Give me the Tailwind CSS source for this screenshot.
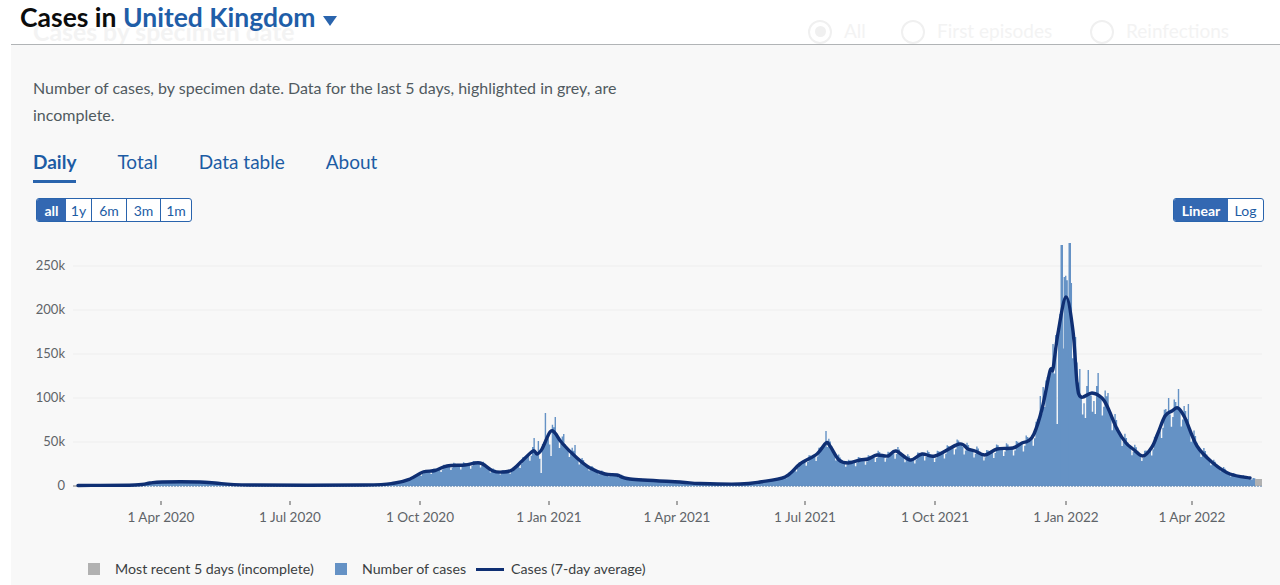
<!DOCTYPE html>
<html lang="en">
  <head>
    <meta charset="UTF-8" />
    <title>Cases in United Kingdom</title>
    <script src="https://cdn.jsdelivr.net/npm/@tailwindcss/browser@4"></script>
  </head>
  <body class="bg-white h-[585px] overflow-hidden font-[family-name:Lato,sans-serif] text-[#0b0c0c]">
    <header class="relative h-[45px] overflow-hidden">
      <div class="absolute left-[33px] right-0 top-0 h-[44px] flex items-center pt-[19px] text-[#f3f3f3]">
        <span class="text-[24.8px] font-bold w-[775px]">Cases by specimen date</span>
        <span class="w-[24px] h-[24px] rounded-full border-2 border-[#f0f0f0] flex items-center justify-center"><span class="w-[11px] h-[11px] rounded-full bg-[#f0f0f0]"></span></span>
        <span class="text-[19px] ml-[12px] w-[57px]">All</span>
        <span class="w-[24px] h-[24px] rounded-full border-2 border-[#f0f0f0]"></span>
        <span class="text-[19px] ml-[12px] w-[153px]">First episodes</span>
        <span class="w-[24px] h-[24px] rounded-full border-2 border-[#f0f0f0]"></span>
        <span class="text-[19px] ml-[12px]">Reinfections</span>
      </div>
      <div class="relative ml-[11px] h-[45px] border-b border-[#b1b4b6] pl-[9px] flex items-center pb-[9px] text-[26.5px] font-bold">
        <h1>Cases in <span class="text-[#1f5ea8]">United Kingdom</span></h1>
        <svg class="ml-[8px] mt-[6px]" width="14" height="10" viewBox="0 0 14 10"><path d="M0 0H14L7 10Z" fill="#2a64ad" /></svg>
      </div>
    </header>

    <main class="ml-[11px] h-[540px] bg-[#f8f8f8] pl-[22px]">
      <p class="pt-[29px] w-[600px] text-[16px] leading-[27px] text-[#505a5f]">
        Number of cases, by specimen date. Data for the last 5 days, highlighted in grey, are incomplete.
      </p>

      <nav class="mt-[20px] flex gap-[41px] text-[19px] text-[#1d5ca4] h-[35px]">
        <a class="font-bold border-b-[3px] border-[#2a64ad]">Daily</a>
        <a>Total</a>
        <a>Data table</a>
        <a>About</a>
      </nav>

      <div class="mt-[15px] flex justify-between pl-[3px] pr-[16px]">
        <div class="flex h-[24px] w-[156px] rounded-[3px] border border-[#2a64ad] bg-white text-[14px] text-[#1d5ca4] overflow-hidden">
          <span class="w-[29px] flex items-center justify-center bg-[#3368b2] text-white font-bold">all</span>
          <span class="w-[26px] flex items-center justify-center border-r border-[#2a64ad]">1y</span>
          <span class="w-[35px] flex items-center justify-center border-r border-[#2a64ad]">6m</span>
          <span class="w-[34px] flex items-center justify-center border-r border-[#2a64ad]">3m</span>
          <span class="flex-1 flex items-center justify-center">1m</span>
        </div>
        <div class="flex h-[24px] w-[91px] rounded-[3px] border border-[#2a64ad] bg-white text-[14px] text-[#1d5ca4] overflow-hidden">
          <span class="w-[54px] flex items-center justify-center bg-[#3368b2] text-white font-bold">Linear</span>
          <span class="flex-1 flex items-center justify-center">Log</span>
        </div>
      </div>

      <!-- viewBox uses page x and y so the data points below read as screen positions -->
      <svg id="chart" class="block -ml-[33px] mt-[9px]" width="1280" height="300" viewBox="0 230 1280 300">
        <g stroke="#eeeeee" stroke-width="1">
          <path d="M73 265H1262M73 309H1262M73 353H1262M73 397H1262M73 441H1262" />
        </g>
        <g fill="#5f6468" font-size="13" text-anchor="end">
          <text x="65" y="269">250k</text>
          <text x="65" y="313">200k</text>
          <text x="65" y="357">150k</text>
          <text x="65" y="401">100k</text>
          <text x="65" y="445">50k</text>
          <text x="65" y="489">0</text>
        </g>
        <path d="M73 485H78" stroke="#777" />
        <path id="bars" fill="#6592c5" />
        <!-- the two Omicron spikes are wider than one day's bar -->
        <path d="M1060.5 485V244H1063V485ZM1068.5 485V242H1071V485Z" fill="#6592c5" />
        <rect x="1255" y="478" width="7" height="7" fill="#b1b1b1" />
        <path d="M78 485.3H1262" stroke="#4f78a8" stroke-width="0.7" stroke-dasharray="2 1" />
        <path id="avg" fill="none" stroke="#0f2f73" stroke-width="3.4" stroke-linejoin="round" stroke-linecap="round" />
        <path d="M161 500v4M290 500v4M420 500v4M549 500v4M677 500v4M805 500v4M935 500v4M1066 500v4M1192 500v4" stroke="#555" />
        <g fill="#5f6468" font-size="13.5" text-anchor="middle">
          <text x="161" y="521">1 Apr 2020</text>
          <text x="290" y="521">1 Jul 2020</text>
          <text x="420" y="521">1 Oct 2020</text>
          <text x="549" y="521">1 Jan 2021</text>
          <text x="677" y="521">1 Apr 2021</text>
          <text x="805" y="521">1 Jul 2021</text>
          <text x="935" y="521">1 Oct 2021</text>
          <text x="1066" y="521">1 Jan 2022</text>
          <text x="1192" y="521">1 Apr 2022</text>
        </g>
      </svg>

      <div class="mt-[28px] ml-[55px] flex items-center text-[14.2px] text-[#3b3f42] h-[20px]">
        <span class="w-[12px] h-[12px] bg-[#b1b1b1]"></span>
        <span class="ml-[15px] w-[220px]">Most recent 5 days (incomplete)</span>
        <span class="w-[12px] h-[12px] bg-[#6592c5]"></span>
        <span class="ml-[15px] w-[114px]">Number of cases</span>
        <span class="w-[28px] h-[3px] bg-[#0f2f73]"></span>
        <span class="ml-[7px]">Cases (7-day average)</span>
      </div>
    </main>

    <script>
      // 7-day average, read off the chart as [x, y]
      const avg = [[78,484.5],[135,484],[150,482],[162,481],[200,481],[215,482],[250,484],[365,484],[395,482],[410,478],[423,471],[435,469.5],[447,465],[465,464],[480,462],[493,470],[503,471],[512,469],[522,460],[533,450],[537,453],[542,448],[550,431],[555,432],[562,442],[577,457],[590,467],[605,473],[617,474],[630,478],[680,481],[700,482.5],[740,483],[760,481],[785,476],[800,463],[817,453],[826,442],[830,445],[839,459],[848,462],[860,459],[868,458],[877,454],[888,455],[896,450],[910,459],[922,453],[935,455],[959,443],[968,448],[975,450],[985,454],[997,448],[1013,447],[1022,442],[1028,440],[1034,433],[1042,408],[1050,370],[1053,368],[1058,332],[1066,296],[1073,330],[1077,382],[1081,396],[1092,392],[1102,397],[1108,407],[1117,428],[1126,442],[1133,448],[1143,455],[1152,446],[1158,432],[1165,415],[1172,410],[1178,407],[1185,417],[1197,445],[1213,462],[1230,473],[1250,477]];

      // catmull-rom through the points so the line has no corners
      let d = "M" + avg[0].join(" ");
      for (let i = 0; i < avg.length - 1; i++) {
        const p0 = avg[Math.max(i - 1, 0)], p1 = avg[i], p2 = avg[i + 1], p3 = avg[Math.min(i + 2, avg.length - 1)];
        const c1 = [p1[0] + (p2[0] - p0[0]) / 6, p1[1] + (p2[1] - p0[1]) / 6];
        const c2 = [p2[0] - (p3[0] - p1[0]) / 6, p2[1] - (p3[1] - p1[1]) / 6];
        d += `C${c1[0].toFixed(1)} ${c1[1].toFixed(1)} ${c2[0].toFixed(1)} ${c2[1].toFixed(1)} ${p2[0]} ${p2[1]}`;
      }
      document.getElementById("avg").setAttribute("d", d);

      function avgAt(x) {
        for (let i = 1; i < avg.length; i++) {
          if (x <= avg[i][0]) {
            const a = avg[i - 1], b = avg[i];
            return a[1] + ((b[1] - a[1]) * (x - a[0])) / (b[0] - a[0]);
          }
        }
        return 478;
      }

      // tall days and low days that stand out from the weekly rhythm
      const spikes = [[1063,276],[1071,282],[1059,313],[1053,343],[1056,423],[1050,367],[1042,386],[1039,395],[1079,368],[1088,369],[1098,372],[1108,392],[1085,417],[1095,413],[1168,397],[1178,388],[1187,403],[545,412],[555,416],[563,433],[574,444],[540,472],[550,455],[826,430],[533,437],[537,440]];
      const weekly = [1.14, 1.1, 1.03, 1, 0.98, 0.8, 0.92];
      const step = 1.41;

      // one outline for all the bars, separate rects leave antialiased seams
      let bars = "M78 485";
      let day = 0;
      for (let x = 78; x < 1255; x += step, day++) {
        const h = 485 - avgAt(x);
        let top = 485 - h * weekly[day % 7];
        const hit = spikes.find((s) => Math.abs(s[0] - x) <= step / 2);
        if (hit) top = hit[1];
        bars += `V${top.toFixed(1)}H${(x + step).toFixed(2)}`;
      }
      document.getElementById("bars").setAttribute("d", bars + "V485Z");
    </script>
  </body>
</html>
